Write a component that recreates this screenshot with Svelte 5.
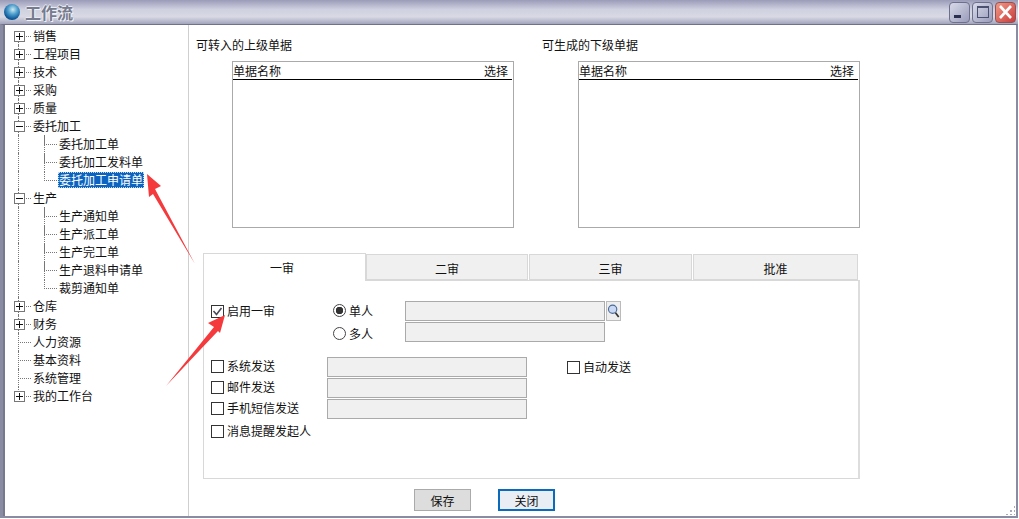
<script lang="ts">
  interface TreeRow {
    label: string
    level: 0 | 1
    box?: "plus" | "minus"
    selected?: boolean
    lastChild?: boolean
  }

  const rows: TreeRow[] = [
    { label: "销售", level: 0, box: "plus" },
    { label: "工程项目", level: 0, box: "plus" },
    { label: "技术", level: 0, box: "plus" },
    { label: "采购", level: 0, box: "plus" },
    { label: "质量", level: 0, box: "plus" },
    { label: "委托加工", level: 0, box: "minus" },
    { label: "委托加工单", level: 1 },
    { label: "委托加工发料单", level: 1 },
    { label: "委托加工申请单", level: 1, selected: true, lastChild: true },
    { label: "生产", level: 0, box: "minus" },
    { label: "生产通知单", level: 1 },
    { label: "生产派工单", level: 1 },
    { label: "生产完工单", level: 1 },
    { label: "生产退料申请单", level: 1 },
    { label: "裁剪通知单", level: 1, lastChild: true },
    { label: "仓库", level: 0, box: "plus" },
    { label: "财务", level: 0, box: "plus" },
    { label: "人力资源", level: 0 },
    { label: "基本资料", level: 0 },
    { label: "系统管理", level: 0 },
    { label: "我的工作台", level: 0, box: "plus" },
  ]

  const tabs = ["一审", "二审", "三审", "批准"]
  const sendOptions = ["系统发送", "邮件发送", "手机短信发送"]
</script>

<div class="window">
  <header class="titlebar">
    <span class="globe"></span>
    <span class="title">工作流</span>
    <div class="win-buttons">
      <button type="button" class="win-btn" aria-label="Minimize"><span class="min-mark"></span></button>
      <button type="button" class="win-btn" aria-label="Maximize"><span class="max-mark"></span></button>
      <button type="button" class="win-btn close" aria-label="Close">
        <svg width="17" height="16" viewBox="0 0 17 16">
          <path d="M3 2 L14 14 M14 2 L3 14" stroke="#fff" stroke-width="2.6" fill="none" />
        </svg>
      </button>
    </div>
  </header>

  <div class="body">
    <nav class="tree">
      {#each rows as row, i}
        <div
          class="row"
          class:child={row.level === 1}
          class:first={i === 0}
          class:end={i === rows.length - 1}
          class:last-child={row.lastChild}
        >
          {#if row.box}
            <span class="box" class:plus={row.box === "plus"}></span>
          {/if}
          <span class="label" class:selected={row.selected}>{row.label}</span>
        </div>
      {/each}
    </nav>

    <main class="main">
      <div class="lists">
        <section class="doc-section">
          <h2 class="doc-title">可转入的上级单据</h2>
          <div class="doc-list">
            <div class="doc-head"><span>单据名称</span><span>选择</span></div>
          </div>
        </section>
        <section class="doc-section">
          <h2 class="doc-title">可生成的下级单据</h2>
          <div class="doc-list">
            <div class="doc-head"><span>单据名称</span><span>选择</span></div>
          </div>
        </section>
      </div>

      <div class="tabs">
        {#each tabs as tab, i}
          <div class="tab" class:active={i === 0}>{tab}</div>
        {/each}
      </div>

      <div class="panel">
        <div class="approver">
          <label class="check enable"><span class="checkbox checked">
            <svg width="11" height="11" viewBox="0 0 11 11">
              <path d="M1.5 5 L4.5 8.5 L9.5 2" stroke="#4a4a5a" stroke-width="1.6" fill="none" />
            </svg>
          </span>启用一审</label>
          <div class="radios">
            <label class="radio-line"><span class="radio on"></span>单人</label>
            <label class="radio-line"><span class="radio"></span>多人</label>
          </div>
          <div class="fields">
            <div class="picker">
              <span class="field"></span>
              <button type="button" class="search" aria-label="Search">
                <svg width="15" height="18" viewBox="0 0 15 18">
                  <circle cx="6.5" cy="7" r="4.8" fill="#c9d8f5" stroke="#4c6a96" stroke-width="1.3" />
                  <path d="M9.8 11 L13.5 16" stroke="#333" stroke-width="2" />
                </svg>
              </button>
            </div>
            <span class="field"></span>
          </div>
        </div>

        <div class="send">
          <div class="send-rows">
            {#each sendOptions as option}
              <div class="send-row">
                <label class="check"><span class="checkbox"></span>{option}</label>
                <span class="field"></span>
              </div>
            {/each}
          </div>
          <label class="check auto"><span class="checkbox"></span>自动发送</label>
        </div>
        <label class="check notify"><span class="checkbox"></span>消息提醒发起人</label>
      </div>

      <div class="actions">
        <button type="button" class="action">保存</button>
        <button type="button" class="action focused">关闭</button>
      </div>
    </main>
  </div>

  <span class="grip"></span>

  <svg class="arrows" width="1019" height="519" viewBox="0 0 1019 519">
    <polygon points="147,174 161,186 155,189 195,264 153,194 149,197" fill="#f43a3c" />
    <polygon points="225,315 208,323 214,327 166,386 218,331 220,333" fill="#f43a3c" />
  </svg>
</div>

<style>
  :global(body) {
    margin: 0;
    background: #fff;
  }

  .window {
    position: relative;
    width: 1019px;
    height: 519px;
    display: flex;
    flex-direction: column;
    box-sizing: border-box;
    overflow: hidden;
    padding: 0 1px 1px 0;
    font-family: "Noto Sans CJK SC", "Liberation Sans", sans-serif;
    font-size: 12px;
    color: #111;
  }

  .titlebar {
    flex: none;
    height: 24px;
    display: flex;
    align-items: center;
    padding: 0 2px 0 4px;
    box-sizing: border-box;
    background: linear-gradient(180deg, #9a9cb8 0%, #d0d1e0 40%, #d8d9e4 70%, #a2a4bc 100%);
  }

  .globe {
    width: 16px;
    height: 16px;
    border-radius: 50%;
    background: radial-gradient(circle at 55% 35%, #cdeaf0 0, #4e9fce 35%, #0d5596 70%, #15405a 100%);
  }

  .title {
    margin-left: 5px;
    font-size: 16px;
    font-weight: 700;
    color: #767b8e;
    text-shadow: 1px 1px 0 #f2f3f8, -1px 0 0 #e8e9f2, 0 -1px 0 #e8e9f2;
  }

  .win-buttons {
    margin-left: auto;
    display: flex;
    gap: 2px;
  }

  .win-btn {
    width: 21px;
    height: 21px;
    padding: 0;
    display: flex;
    align-items: center;
    justify-content: center;
    position: relative;
    border: 1px solid #6d6f8c;
    border-radius: 4px;
    background: linear-gradient(135deg, #d8daea, #9a9cba);
  }

  .win-btn.close {
    border-color: #96504f;
    background: linear-gradient(135deg, #f09a86, #c83c3c);
  }

  .min-mark {
    width: 7px;
    height: 3px;
    margin: 9px 5px 0 0;
    background: #2c3050;
  }

  .max-mark {
    width: 10px;
    height: 9px;
    border: 1px solid #4c5070;
    border-top-width: 2px;
  }

  .body {
    flex: 1;
    display: flex;
    min-height: 0;
    background: #fff;
    border: 2px solid #8a8ca4;
    border-top-color: #70728c;
    border-top-width: 1px;
    border-left-width: 3px;
  }

  .tree {
    flex: none;
    width: 186px;
    box-sizing: border-box;
    padding-top: 2px;
    border-left: 2px solid #77798c;
    border-right: 1px solid #cfcfcf;
  }

  .row {
    position: relative;
    height: 18px;
    display: flex;
    align-items: center;
    padding-left: 27px;
  }

  .row.child {
    padding-left: 53px;
  }

  /* root guide, runs through every row */
  .row::before {
    content: "";
    position: absolute;
    left: 13px;
    top: 0;
    bottom: 0;
    border-left: 1px dotted #777;
  }

  .row.first::before {
    top: 9px;
  }

  .row.end::before {
    bottom: 9px;
  }

  /* elbow into the label */
  .row::after {
    content: "";
    position: absolute;
    left: 13px;
    width: 13px;
    top: 9px;
    border-top: 1px dotted #777;
  }

  .row.child::after {
    left: 39px;
    width: 12px;
    top: 0;
    height: 9px;
    border-top: none;
    border-left: 1px dotted #777;
    border-bottom: 1px dotted #777;
  }

  /* branch guide continues down to the next sibling */
  .row.child:not(.last-child) {
    background: repeating-linear-gradient(#777 0 1px, transparent 1px 2px) no-repeat 39px 0 / 1px 100%;
  }

  .box {
    position: absolute;
    z-index: 1;
    left: 9px;
    top: 4px;
    width: 9px;
    height: 9px;
    border: 1px solid #777;
    background:
      linear-gradient(#111, #111) center / 7px 1px no-repeat,
      #fff;
  }

  .box.plus {
    background:
      linear-gradient(#111, #111) center / 7px 1px no-repeat,
      linear-gradient(#111, #111) center / 1px 7px no-repeat,
      #fff;
  }

  .label {
    position: relative;
    z-index: 1;
    padding: 0 1px;
    line-height: 16px;
    white-space: nowrap;
    background: #fff;
  }

  .label.selected {
    background: #0a64c0;
    color: #fff;
    outline: 1px dotted #c8d8ee;
    outline-offset: -1px;
  }

  .main {
    flex: 1;
    min-width: 0;
    padding: 12px 0 0 14px;
  }

  .lists {
    display: flex;
    margin-left: -7px;
  }

  .doc-section {
    width: 346px;
  }

  .doc-title {
    margin: 0 0 8px;
    font-size: 12px;
    font-weight: 400;
    line-height: 16px;
  }

  .doc-list {
    width: 282px;
    height: 167px;
    margin-left: 36px;
    box-sizing: border-box;
    border: 1px solid #aaa;
  }

  .doc-head {
    height: 18px;
    box-sizing: border-box;
    display: flex;
    justify-content: space-between;
    padding: 0 4px 0 0;
    margin-right: 1px;
    line-height: 17px;
    border-bottom: 1px solid #000;
  }

  .tabs {
    display: grid;
    grid-template-columns: 163px 163px 164px 166px;
    width: 656px;
    margin-top: 25px;
    height: 27px;
  }

  .tab {
    height: 26px;
    margin-top: 1px;
    margin-right: 1px;
    box-sizing: border-box;
    text-align: center;
    line-height: 27px;
    background: #f0f0f0;
    border: 1px solid #d8d8d8;
  }

  .tab.active {
    height: 28px;
    margin-top: 0;
    margin-right: 0;
    position: relative;
    z-index: 1;
    background: #fff;
    border-bottom: none;
    padding-right: 5px;
  }

  .panel {
    width: 657px;
    height: 199px;
    box-sizing: border-box;
    padding: 20px 7px 0;
    border: 1px solid #d8d8d8;
    border-right: 2px solid #ddd;
  }

  .approver {
    display: flex;
    align-items: flex-start;
  }

  .check {
    display: flex;
    align-items: center;
    gap: 3px;
    height: 18px;
    line-height: 18px;
    white-space: nowrap;
  }

  .checkbox {
    flex: none;
    width: 13px;
    height: 13px;
    box-sizing: border-box;
    display: flex;
    align-items: center;
    justify-content: center;
    border: 1px solid #333;
    background: #fff;
  }

  .checkbox svg {
    display: block;
  }

  .enable {
    width: 122px;
    margin-top: 1px;
  }

  .radios {
    width: 72px;
    display: flex;
    flex-direction: column;
    gap: 5px;
  }

  .radio-line {
    display: flex;
    align-items: center;
    gap: 3px;
    height: 18px;
  }

  .radio {
    width: 13px;
    height: 13px;
    box-sizing: border-box;
    border: 1px solid #444;
    border-radius: 50%;
    background: #fff;
  }

  .radio.on {
    background: radial-gradient(circle, #333 0 3.5px, #fff 4px);
  }

  .fields {
    display: flex;
    flex-direction: column;
    gap: 1px;
  }

  .picker {
    display: flex;
    gap: 1px;
  }

  .field {
    display: block;
    width: 200px;
    height: 20px;
    box-sizing: border-box;
    background: #f0f0f0;
    border: 1px solid #aaa;
  }

  .search {
    width: 15px;
    height: 20px;
    padding: 0;
    box-sizing: border-box;
    display: flex;
    align-items: center;
    justify-content: center;
    background: #eee;
    border: 1px solid #bbb;
  }

  .send {
    display: flex;
    align-items: flex-start;
    margin-top: 15px;
  }

  .send-rows {
    width: 356px;
    display: flex;
    flex-direction: column;
    gap: 1px;
  }

  .send-row {
    display: flex;
    height: 20px;
    align-items: center;
  }

  .send-row .check {
    width: 116px;
    margin-top: -2px;
  }

  .auto {
    margin-top: 1px;
  }

  .notify {
    margin-top: 3px;
  }

  .actions {
    display: flex;
    gap: 27px;
    margin: 10px 0 0 211px;
  }

  .action {
    width: 57px;
    height: 22px;
    padding: 0;
    box-sizing: border-box;
    font: inherit;
    color: #111;
    background: #ddd;
    border: 1px solid #aaa;
  }

  .action.focused {
    background: #e9eef5;
    border: 2px solid #0a6bbd;
  }

  .grip {
    position: absolute;
    right: 4px;
    bottom: 4px;
    width: 10px;
    height: 10px;
    background: radial-gradient(circle, #aab 0 1.2px, transparent 1.3px) 0 0 / 4px 4px;
    clip-path: polygon(100% 0, 100% 100%, 0 100%);
  }

  .arrows {
    position: absolute;
    left: 0;
    top: 0;
    pointer-events: none;
  }
</style>
